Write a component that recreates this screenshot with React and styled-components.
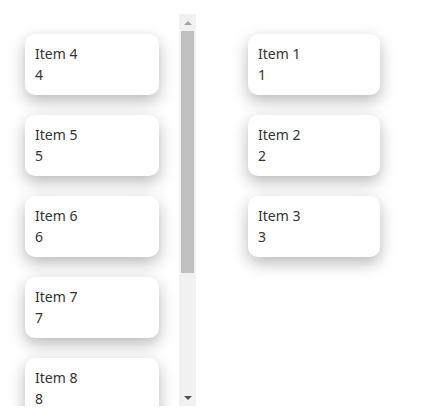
import React from "react";
import styled, { createGlobalStyle } from "styled-components";

const Global = createGlobalStyle`
  html, body { margin: 0; padding: 0; background: #fff; }
  body { font-family: "Segoe UI", "Noto Sans", "Open Sans", sans-serif; }
`;

const Board = styled.div`
  display: flex;
  align-items: flex-start;
  gap: 32px;
  padding: 14px 0 0 5px;
`;

const ScrollPane = styled.div`
  display: flex;
  width: 191px;
  height: 392px;
  background: #fff;
`;

const Column = styled.div`
  box-sizing: border-box;
  flex: ${(p) => (p.$scroll ? "1 1 auto" : "none")};
  width: ${(p) => (p.$width ? `${p.$width}px` : "auto")};
  height: ${(p) => (p.$scroll ? "100%" : "auto")};
  overflow-y: ${(p) => (p.$scroll ? "auto" : "visible")};
  scrollbar-width: none;
  padding: 20px;
  display: flex;
  flex-direction: column;
  gap: 20px;
  background: #fff;
  &::-webkit-scrollbar {
    display: none;
  }
`;

const ScrollBar = styled.div`
  flex: none;
  width: 17px;
  height: 100%;
  display: flex;
  flex-direction: column;
  background: #f1f1f1;
`;

const ArrowButton = styled.div`
  flex: none;
  height: 17px;
  display: flex;
  align-items: center;
  justify-content: center;
  &::before {
    content: "";
    width: 0;
    height: 0;
    border-left: 4px solid transparent;
    border-right: 4px solid transparent;
    ${(p) =>
      p.$dir === "up"
        ? `border-bottom: 4px solid ${p.$color}; margin-top: 1px;`
        : `border-top: 4px solid ${p.$color}; margin-top: 1px;`}
  }
`;

const Track = styled.div`
  flex: 1 1 auto;
  padding: 0 2px;
`;

const Thumb = styled.div`
  background: #c1c1c1;
`;

const Card = styled.div`
  flex: none;
  box-sizing: border-box;
  height: 61px;
  padding: 10px 10px;
  background: #fff;
  border-radius: 10px;
  box-shadow: 0 6px 16px rgba(0, 0, 0, 0.28);
  color: #333;
  font-size: 14px;
  line-height: 20.5px;
`;

const Line = styled.div``;

const leftItems = [4, 5, 6, 7, 8, 9, 10];
const rightItems = [1, 2, 3];

function ItemCard({ n }) {
  return (
    <Card>
      <Line>Item {n}</Line>
      <Line>{n}</Line>
    </Card>
  );
}

export default function App() {
  return (
    <>
      <Global />
      <Board>
        <ScrollPane>
          <Column $scroll>
            {leftItems.map((n) => (
              <ItemCard key={n} n={n} />
            ))}
          </Column>
          <ScrollBar>
            <ArrowButton $dir="up" $color="#a3a3a3" />
            <Track>
              <Thumb style={{ height: 242 }} />
            </Track>
            <ArrowButton $dir="down" $color="#505050" />
          </ScrollBar>
        </ScrollPane>
        <Column $width={172}>
          {rightItems.map((n) => (
            <ItemCard key={n} n={n} />
          ))}
        </Column>
      </Board>
    </>
  );
}
